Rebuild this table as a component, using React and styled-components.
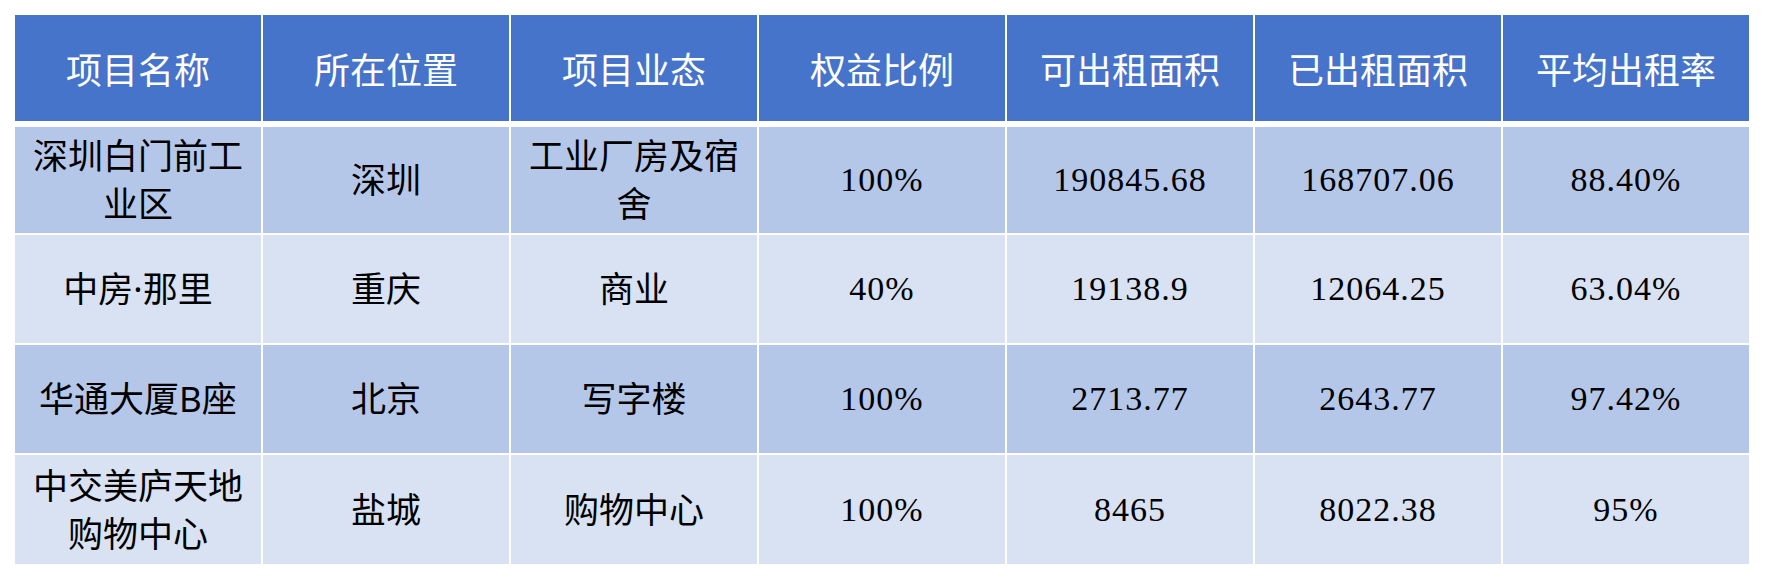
import React from "react";
import styled, { createGlobalStyle } from "styled-components";

const Global = createGlobalStyle`
  html, body { margin: 0; padding: 0; background: #ffffff; }
  body { font-family: "Noto Sans", "Noto Sans CJK SC", sans-serif; }
`;

const Page = styled.div`
  padding: 15px;
  width: 1766px;
  box-sizing: border-box;
`;

const Table = styled.div`
  display: flex;
  flex-direction: column;
  gap: 2px;
  width: 1736px;
`;

const Row = styled.div`
  display: grid;
  grid-template-columns: repeat(7, 246px);
  column-gap: 2px;
  height: ${(p) => p.$h}px;
  margin-bottom: ${(p) => (p.$head ? 4 : 0)}px;
`;

const Cell = styled.div`
  display: flex;
  align-items: center;
  justify-content: center;
  text-align: center;
  box-sizing: border-box;
  padding: 0 10px;
  background: ${(p) => (p.$head ? "#4674CB" : p.$alt ? "#D9E2F3" : "#B5C7E9")};
  color: ${(p) => (p.$head ? "#ffffff" : "#000000")};
  font-family: ${(p) =>
    p.$num
      ? '"Liberation Serif", "Noto Sans CJK SC", serif'
      : '"Noto Sans", "Noto Sans CJK SC", sans-serif'};
  font-size: ${(p) => (p.$head ? 36 : p.$num ? 34 : 35)}px;
  letter-spacing: ${(p) => (p.$num ? 1 : 0)}px;
  line-height: 48px;
  padding-top: ${(p) => (p.$head ? 6 : 0)}px;
  word-break: break-all;
`;

const headers = ["项目名称", "所在位置", "项目业态", "权益比例", "可出租面积", "已出租面积", "平均出租率"];

const rows = [
  { h: 106, cells: ["深圳白门前工业区", "深圳", "工业厂房及宿舍", "100%", "190845.68", "168707.06", "88.40%"] },
  { h: 108, cells: ["中房·那里", "重庆", "商业", "40%", "19138.9", "12064.25", "63.04%"] },
  { h: 108, cells: ["华通大厦B座", "北京", "写字楼", "100%", "2713.77", "2643.77", "97.42%"] },
  { h: 109, cells: ["中交美庐天地购物中心", "盐城", "购物中心", "100%", "8465", "8022.38", "95%"] },
];

export default function App() {
  return (
    <Page>
      <Global />
      <Table>
        <Row $h={106} $head>
          {headers.map((t) => (
            <Cell key={t} $head>
              {t}
            </Cell>
          ))}
        </Row>
        {rows.map((r, i) => (
          <Row key={i} $h={r.h}>
            {r.cells.map((c, j) => (
              <Cell key={j} $alt={i % 2 === 1} $num={j >= 3}>
                {c}
              </Cell>
            ))}
          </Row>
        ))}
      </Table>
    </Page>
  );
}
